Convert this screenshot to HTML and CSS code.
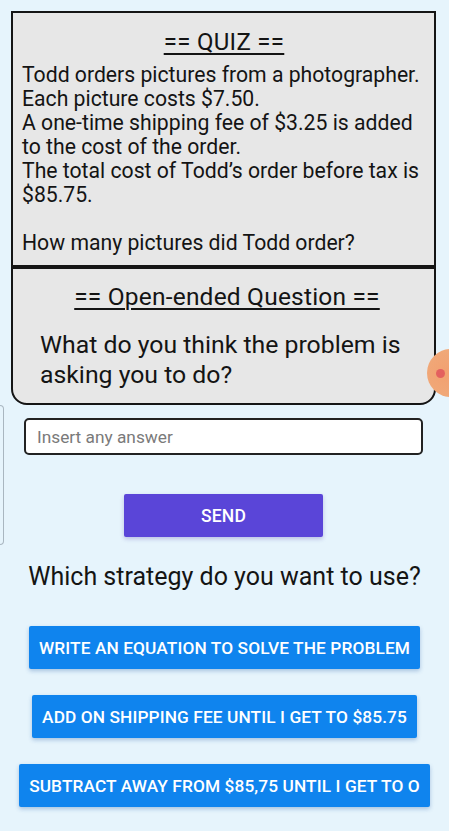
FILE: index.html
```html
<!DOCTYPE html>
<html>
<head>
<meta charset="utf-8">
<link rel="stylesheet" href="styles.css">
</head>
<body>
<div class="page">
  <section class="quiz">
    <h1 class="quiz-title">== QUIZ ==</h1>
    <div class="quiz-text">
      <p>Todd orders pictures from a photographer.</p>
      <p>Each picture costs $7.50.</p>
      <p>A one-time shipping fee of $3.25 is added to the cost of the order.</p>
      <p>The total cost of Todd’s order before tax is $85.75.</p>
      <p class="blank">&nbsp;</p>
      <p>How many pictures did Todd order?</p>
    </div>
  </section>
  <section class="open">
    <h2 class="open-title">== Open-ended Question ==</h2>
    <p class="open-text">What do you think the problem is asking you to do?</p>
  </section>
  <div class="answer-row">
    <input class="answer" type="text" placeholder="Insert any answer">
  </div>
  <div class="send-row">
    <button class="send">SEND</button>
  </div>
  <p class="strategy">Which strategy do you want to use?</p>
  <div class="choices">
    <button class="choice">WRITE AN EQUATION TO SOLVE THE PROBLEM</button>
    <button class="choice">ADD ON SHIPPING FEE UNTIL I GET TO $85.75</button>
    <button class="choice">SUBTRACT AWAY FROM $85,75 UNTIL I GET TO O</button>
  </div>
  <div class="side-edge"></div>
  <div class="touch"><span class="touch-dot"></span></div>
</div>
</body>
</html>
```
FILE: styles.css
```css
html, body {
  margin: 0;
  padding: 0;
}
body {
  background: #e6f4fc;
  font-family: Roboto, "Noto Sans", "Liberation Sans", sans-serif;
  color: #141414;
  width: 449px;
  height: 831px;
  overflow: hidden;
}
.page {
  position: relative;
  padding-top: 11px;
  height: 820px;
  overflow: hidden;
}
.quiz {
  margin: 0 13px 0 11px;
  border: 2px solid #151515;
  background: #e7e7e7;
  padding: 16px 8px 10px 9px;
}
.quiz-title {
  margin: 0;
  font-size: 24px;
  font-weight: 400;
  line-height: 26px;
  letter-spacing: 0.3px;
  text-align: center;
  text-decoration: underline;
  text-underline-offset: 3px;
  text-decoration-thickness: 1.5px;
}
.quiz-text {
  margin-top: 8px;
  font-size: 21.2px;
  line-height: 24px;
}
.quiz-text p {
  margin: 0;
}
.open {
  margin: 0 13px 0 11px;
  border: 2px solid #151515;
  border-top-width: 2px;
  border-radius: 0 0 16px 16px;
  background: #e7e7e7;
  padding: 14px 20px 13px 27px;
}
.open-title {
  margin: 0;
  font-size: 24.5px;
  font-weight: 400;
  line-height: 28px;
  letter-spacing: 0.2px;
  text-align: center;
  text-decoration: underline;
  text-underline-offset: 3px;
  text-decoration-thickness: 1.5px;
}
.open-text {
  margin: 19px 0 0 0;
  font-size: 24.8px;
  line-height: 30px;
}
.answer-row {
  margin: 13px 26px 0 24px;
}
.answer {
  box-sizing: border-box;
  width: 100%;
  height: 37px;
  border: 2px solid #222;
  border-radius: 5px;
  background: #fff;
  padding: 0 11px;
  font-family: Roboto, "Noto Sans", sans-serif;
  font-size: 17.3px;
  color: #333;
  outline: none;
}
.answer::placeholder {
  color: #7a7a7a;
}
.send-row {
  display: flex;
  justify-content: center;
  margin-top: 39px;
  padding-right: 2px;
}
.send {
  width: 199px;
  height: 43px;
  border: none;
  border-radius: 2px;
  background: #5a45d8;
  color: #fff;
  font-family: Roboto, sans-serif;
  font-weight: 500;
  font-size: 17.5px;
  letter-spacing: 0.2px;
  box-shadow: 0 2px 4px rgba(60, 40, 160, 0.25);
}
.strategy {
  margin: 25px 0 0 0;
  text-align: center;
  font-size: 25px;
  line-height: 30px;
}
.choices {
  margin-top: 34px;
  display: flex;
  flex-direction: column;
  align-items: center;
  gap: 26px;
}
.choice {
  height: 43px;
  padding: 0 10px;
  border: none;
  border-radius: 2px;
  background: #0f84ee;
  color: #fff;
  font-family: Roboto, sans-serif;
  font-weight: 500;
  font-size: 17.3px;
  letter-spacing: 0.1px;
  white-space: nowrap;
  box-shadow: 0 2px 4px rgba(20, 80, 160, 0.3);
}
.side-edge {
  position: absolute;
  left: 0;
  top: 405px;
  width: 3px;
  height: 138px;
  border: 1.5px solid #a9b6c0;
  border-left: none;
  border-radius: 0 6px 6px 0;
}
.touch {
  position: absolute;
  left: 427px;
  top: 349px;
  width: 48px;
  height: 48px;
  border-radius: 50%;
  background: radial-gradient(circle at 40% 50%, #f2a070 0%, #f0a878 60%, rgba(240, 180, 130, 0.8) 100%);
}
.touch-dot {
  position: absolute;
  left: 9px;
  top: 20px;
  width: 9px;
  height: 9px;
  border-radius: 50%;
  background: #e0505a;
  opacity: 0.8;
}
```
